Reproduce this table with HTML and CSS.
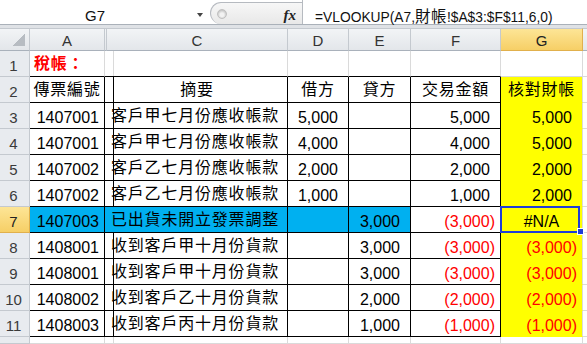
FILE: index.html
```html
<!DOCTYPE html>
<html lang="zh-Hant">
<head>
<meta charset="utf-8">
<title>VLOOKUP</title>
<link rel="stylesheet" href="styles.css">
</head>
<body>
<div class="fbar">
  <div class="namebox">G7</div>
  <div class="nbdrop"><span class="tri"></span></div>
  <div class="fxzone"><span class="knob"></span><span class="fx">fx</span></div>
  <div class="finput">=VLOOKUP(A7,<span class="fcjk">財帳</span>!$A$3:$F$11,6,0)</div>
</div>
<div class="band"></div>
<div class="sheet">
  <div class="ch corner"></div><div class="ch">A</div><div class="ch"></div><div class="ch">C</div><div class="ch">D</div><div class="ch">E</div><div class="ch">F</div><div class="ch sel">G</div><div class="ch"></div>

  <div class="rh">1</div><div class="c t kb title">稅帳：</div><div class="c kb"></div><div class="c kb"></div><div class="c kb"></div><div class="c kb"></div><div class="c kb"></div><div class="c"></div><div class="c"></div>

  <div class="rh">2</div><div class="c k t ctr">傳票編號</div><div class="c k"></div><div class="c k t ctr">摘要</div><div class="c k t ctr">借方</div><div class="c k t ctr">貸方</div><div class="c k t ctr">交易金額</div><div class="c y t ctr">核對財帳</div><div class="c"></div>

  <div class="rh">3</div><div class="c k r">1407001</div><div class="c k"></div><div class="c k t">客戶甲七月份應收帳款</div><div class="c k n">5,000</div><div class="c k n"></div><div class="c k n">5,000</div><div class="c y n">5,000</div><div class="c"></div>

  <div class="rh">4</div><div class="c k r">1407001</div><div class="c k"></div><div class="c k t">客戶甲七月份應收帳款</div><div class="c k n">4,000</div><div class="c k n"></div><div class="c k n">4,000</div><div class="c y n">5,000</div><div class="c"></div>

  <div class="rh">5</div><div class="c k r">1407002</div><div class="c k"></div><div class="c k t">客戶乙七月份應收帳款</div><div class="c k n">2,000</div><div class="c k n"></div><div class="c k n">2,000</div><div class="c y n">2,000</div><div class="c"></div>

  <div class="rh">6</div><div class="c k r">1407002</div><div class="c k"></div><div class="c k t">客戶乙七月份應收帳款</div><div class="c k n">1,000</div><div class="c k n"></div><div class="c k n">1,000</div><div class="c y n">2,000</div><div class="c"></div>

  <div class="rh sel">7</div><div class="c k r bl">1407003</div><div class="c k bl"></div><div class="c k t bl">已出貨未開立發票調整</div><div class="c k n bl"></div><div class="c k n bl">3,000</div><div class="c k neg">(3,000)</div><div class="c y ctr g7">#N/A<span class="selbox"></span><span class="handle"></span></div><div class="c"></div>

  <div class="rh">8</div><div class="c k r">1408001</div><div class="c k"></div><div class="c k t">收到客戶甲十月份貨款</div><div class="c k n"></div><div class="c k n">3,000</div><div class="c k neg">(3,000)</div><div class="c y neg">(3,000)</div><div class="c"></div>

  <div class="rh">9</div><div class="c k r">1408001</div><div class="c k"></div><div class="c k t">收到客戶甲十月份貨款</div><div class="c k n"></div><div class="c k n">3,000</div><div class="c k neg">(3,000)</div><div class="c y neg">(3,000)</div><div class="c"></div>

  <div class="rh">10</div><div class="c k r">1408002</div><div class="c k"></div><div class="c k t">收到客戶乙十月份貨款</div><div class="c k n"></div><div class="c k n">2,000</div><div class="c k neg">(2,000)</div><div class="c y neg">(2,000)</div><div class="c"></div>

  <div class="rh">11</div><div class="c k r">1408003</div><div class="c k"></div><div class="c k t">收到客戶丙十月份貨款</div><div class="c k n"></div><div class="c k n">1,000</div><div class="c k neg">(1,000)</div><div class="c y neg">(1,000)</div><div class="c"></div>

  <div class="rh"></div><div class="c"></div><div class="c"></div><div class="c"></div><div class="c"></div><div class="c"></div><div class="c"></div><div class="c"></div><div class="c"></div>
</div>
</body>
</html>
```
FILE: styles.css
```css
html, body {
  margin: 0;
  padding: 0;
}
body {
  width: 587px;
  height: 344px;
  overflow: hidden;
  background: #fff;
  font-family: "Liberation Sans", "Noto Sans CJK TC", sans-serif;
  color: #000;
}

/* formula bar */
.fbar {
  display: flex;
  height: 25px;
  box-sizing: border-box;
  border-bottom: 1px solid #aab1b9;
  background: #fff;
}
.namebox {
  width: 190px;
  text-align: center;
  font-size: 15px;
  line-height: 19px;
  padding-top: 6px;
  box-sizing: border-box;
  color: #111;
}
.nbdrop {
  width: 20px;
  display: flex;
  justify-content: center;
  align-items: flex-start;
  padding-top: 13px;
  box-sizing: border-box;
}
.tri {
  width: 0;
  height: 0;
  border-left: 3.5px solid transparent;
  border-right: 3.5px solid transparent;
  border-top: 4px solid #444;
}
.fxzone {
  width: 92px;
  margin-top: 2px;
  box-sizing: border-box;
  border: 1px solid #b6bac0;
  border-right: none;
  border-bottom: none;
  border-radius: 12px 0 0 12px;
  background: linear-gradient(#f7f7f7, #e8e8e8);
  display: flex;
  align-items: flex-start;
}
.knob {
  width: 8px;
  height: 8px;
  margin: 6px 0 0 6px;
  border-radius: 50%;
  background: radial-gradient(circle at 50% 60%, #f2f2f2 0 30%, #c9c9c9 70%);
  border: 1px solid #c0c0c0;
}
.fx {
  margin-left: auto;
  padding-right: 6px;
  padding-top: 3px;
  font-family: "Liberation Serif", serif;
  font-style: italic;
  font-weight: bold;
  font-size: 15px;
  line-height: 18px;
  color: #222;
}
.finput {
  flex: 1;
  min-width: 0;
  border-left: 1px solid #b6bac0;
  padding-left: 12px;
  padding-top: 6px;
  font-size: 13.8px;
  line-height: 19px;
  white-space: nowrap;
  color: #111;
}
.fcjk {
  font-family: "Noto Sans CJK TC", sans-serif;
  font-size: 15.5px;
  letter-spacing: 0.4px;
}
.band {
  height: 3px;
  background: #dfe2e6;
}

/* sheet grid */
.sheet {
  display: grid;
  grid-template-columns: 30px 75px 2px 181px 61px 62px 90px 82px 1fr;
  grid-template-rows: 23px repeat(11, 26px) 7px;
}
.ch, .rh, .c {
  box-sizing: border-box;
  white-space: nowrap;
  overflow: hidden;
}
.ch {
  background: linear-gradient(#f2f4f6, #e3e6ea);
  border-top: 1px solid #c4c9cf;
  border-right: 1px solid #c4c9cf;
  border-bottom: 1px solid #a9b1bb;
  text-align: center;
  font-size: 15px;
  line-height: 18px;
  padding-top: 3px;
  color: #333;
}
.corner {
  background:
    linear-gradient(to bottom right, transparent 50%, #b7bcc2 50%) right 4px bottom 4px / 12px 12px no-repeat,
    linear-gradient(#f2f4f6, #e3e6ea);
}
.rh {
  background: #e8ebef;
  border-right: 1px solid #c4c9cf;
  border-bottom: 1px solid #c4c9cf;
  text-align: center;
  font-size: 15px;
  line-height: 18px;
  padding-top: 6px;
  padding-right: 2px;
  color: #3a3a3a;
}
.sel {
  background: linear-gradient(#fde596, #f6cf66);
  border-right-color: #e1b04c;
  border-bottom-color: #e1b04c;
  color: #222;
}
.c {
  border-right: 1px solid #dadada;
  border-bottom: 1px solid #dadada;
  font-size: 16px;
  line-height: 21px;
  padding: 4px 4px 0;
}
.k {
  border-right-color: #000;
  border-bottom-color: #000;
}
.kb {
  border-bottom-color: #000;
}
.t {
  font-family: "Noto Sans CJK TC", "Liberation Sans", sans-serif;
  padding-top: 1px;
  letter-spacing: 0.8px;
}
.ctr {
  text-align: center;
  padding-left: 0;
  padding-right: 0;
}
.r {
  text-align: right;
  padding-right: 5px;
}
.n {
  text-align: right;
  padding-right: 10px;
}
.neg {
  text-align: right;
  padding-right: 5px;
  color: #f00;
}
.y {
  background: #ff0;
  border-bottom-color: #ff0;
}
.bl {
  background: #00b0f0;
}
.title {
  color: #f00;
  font-weight: bold;
}
.g7 {
  position: relative;
  overflow: visible;
}
.selbox {
  position: absolute;
  left: -1px;
  top: -1px;
  right: 2px;
  bottom: -1px;
  border: 2px solid #1f3ed6;
}
.handle {
  position: absolute;
  right: -2px;
  bottom: -3px;
  width: 5px;
  height: 5px;
  background: #1f3ed6;
  border: 1px solid #fff;
}
```
